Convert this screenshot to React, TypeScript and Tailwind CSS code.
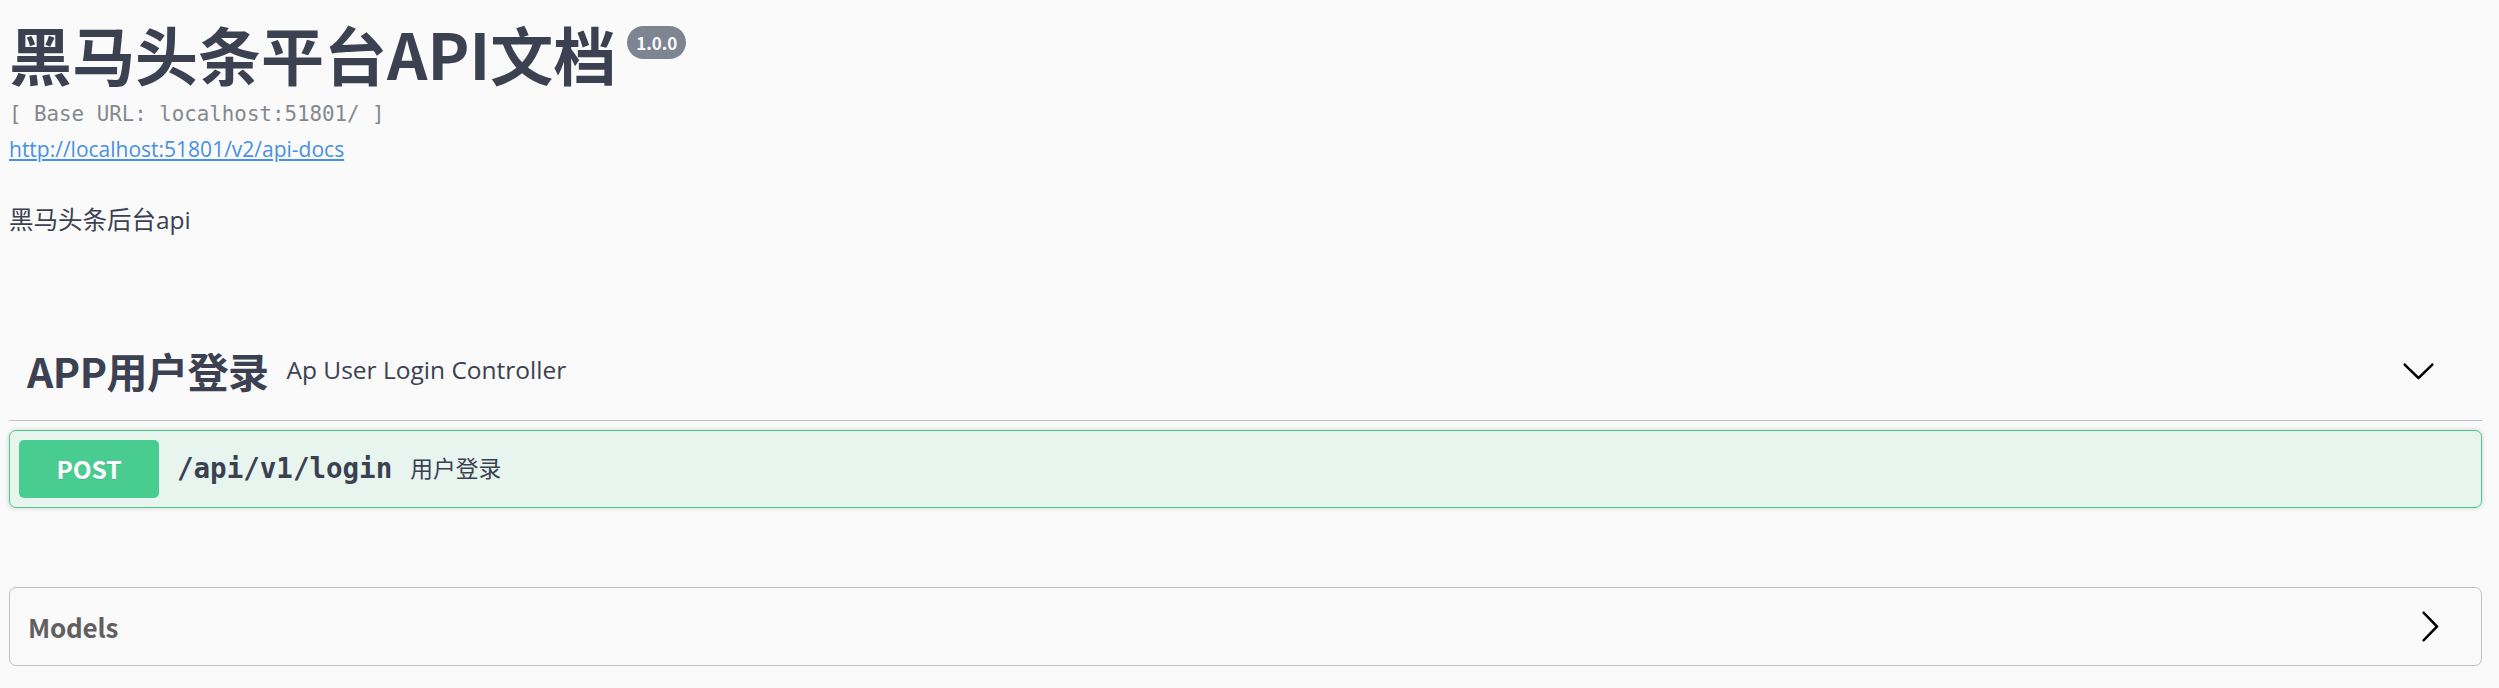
import React from "react";

const ChevronDown = () => (
  <svg width="35" height="35" viewBox="0 0 20 20" className="shrink-0" aria-hidden="true">
    <path
      fill="#000"
      d="M17.418 6.109c.272-.268.709-.268.979 0s.271.701 0 .969l-7.908 7.83c-.27.268-.707.268-.979 0l-7.908-7.83c-.27-.268-.27-.701 0-.969.271-.268.709-.268.979 0L10 13.25l7.418-7.141z"
    />
  </svg>
);

const ChevronRight = () => (
  <svg width="35" height="35" viewBox="0 0 20 20" className="shrink-0" aria-hidden="true">
    <path
      fill="#000"
      d="M13.25 10L6.109 2.58c-.268-.27-.268-.707 0-.979.268-.27.701-.27.969 0l7.83 7.908c.268.271.268.709 0 .979l-7.83 7.908c-.268.271-.701.27-.969 0-.268-.269-.268-.707 0-.979L13.25 10z"
    />
  </svg>
);

export default function App() {
  return (
    <div className="min-h-screen w-full bg-[#fafafa] pl-[9px] pr-[17px] pb-[20px] text-[#3b4151]">
      {/* Info */}
      <div className="pt-[21px]">
        <div className="flex items-start">
          <h2 className="m-0 font-['Noto_Sans_CJK_SC','Noto_Sans',sans-serif] text-[63px] font-bold leading-[64px] text-[#3b4151]">
            黑马头条平台API文档
          </h2>
          <span className="ml-[11px] mt-[5px] flex h-[33px] items-center rounded-full bg-[#7d8492] px-[9px] font-['Noto_Sans_CJK_SC','Noto_Sans',sans-serif] text-[17px] font-bold text-[#fafafa]">
            1.0.0
          </span>
        </div>
        <div className="mt-[17px] font-['DejaVu_Sans_Mono',monospace] text-[20.8px] leading-[24px] text-[#85888e]">
          [ Base URL: localhost:51801/ ]
        </div>
        <div className="mt-[9px] leading-[28px]">
          <a
            href="#"
            className="font-['Open_Sans','Noto_Sans_CJK_SC',sans-serif] text-[21px] text-[#4990e2] underline"
          >
            http://localhost:51801/v2/api-docs
          </a>
        </div>
        <div className="mt-[38px] font-['Open_Sans','Noto_Sans_CJK_SC',sans-serif] text-[24.5px] leading-[34px] text-[#3b4151]">
          黑马头条后台api
        </div>
      </div>

      {/* Tag section */}
      <div className="mt-[83px]">
        <div className="flex items-center border-b border-[rgba(59,65,81,0.3)] py-[18px] pl-[18px] pr-[46px]">
          <h4 className="m-0 font-['Noto_Sans_CJK_SC','Noto_Sans',sans-serif] text-[41px] font-bold leading-[64px] tracking-[-0.5px] text-[#3b4151]">
            APP用户登录
          </h4>
          <span className="ml-[18px] flex-1 font-['Open_Sans','Noto_Sans_CJK_SC',sans-serif] text-[24.5px] text-[#3b4151]">
            Ap User Login Controller
          </span>
          <ChevronDown />
        </div>

        <div className="mt-[9px] rounded-[7px] border border-[#49cc90] bg-[#e8f5ef] shadow-[0_0_5px_rgba(0,0,0,0.19)]">
          <div className="flex items-center px-[9px] py-[9px]">
            <span className="flex h-[58px] w-[140px] items-center justify-center rounded-[5px] bg-[#49cc90] font-['Noto_Sans_CJK_SC','Noto_Sans',sans-serif] text-[24.5px] font-bold text-white [text-shadow:0_1px_0_rgba(0,0,0,0.1)]">
              POST
            </span>
            <span className="px-[18px] font-['DejaVu_Sans_Mono',monospace] text-[27.5px] font-bold text-[#3b4151]">
              /api/v1/login
            </span>
            <span className="font-['Open_Sans','Noto_Sans_CJK_SC',sans-serif] text-[22.75px] text-[#3b4151]">
              用户登录
            </span>
          </div>
        </div>
      </div>

      {/* Models */}
      <div className="mt-[79px] rounded-[7px] border border-[rgba(59,65,81,0.3)]">
        <div className="flex items-center py-[17.5px] pl-[18px] pr-[34px]">
          <h4 className="m-0 flex-1 font-['Noto_Sans_CJK_SC','Noto_Sans',sans-serif] text-[26px] font-bold leading-[42px] tracking-[-0.2px] text-[#606060]">
            Models
          </h4>
          <ChevronRight />
        </div>
      </div>
    </div>
  );
}
